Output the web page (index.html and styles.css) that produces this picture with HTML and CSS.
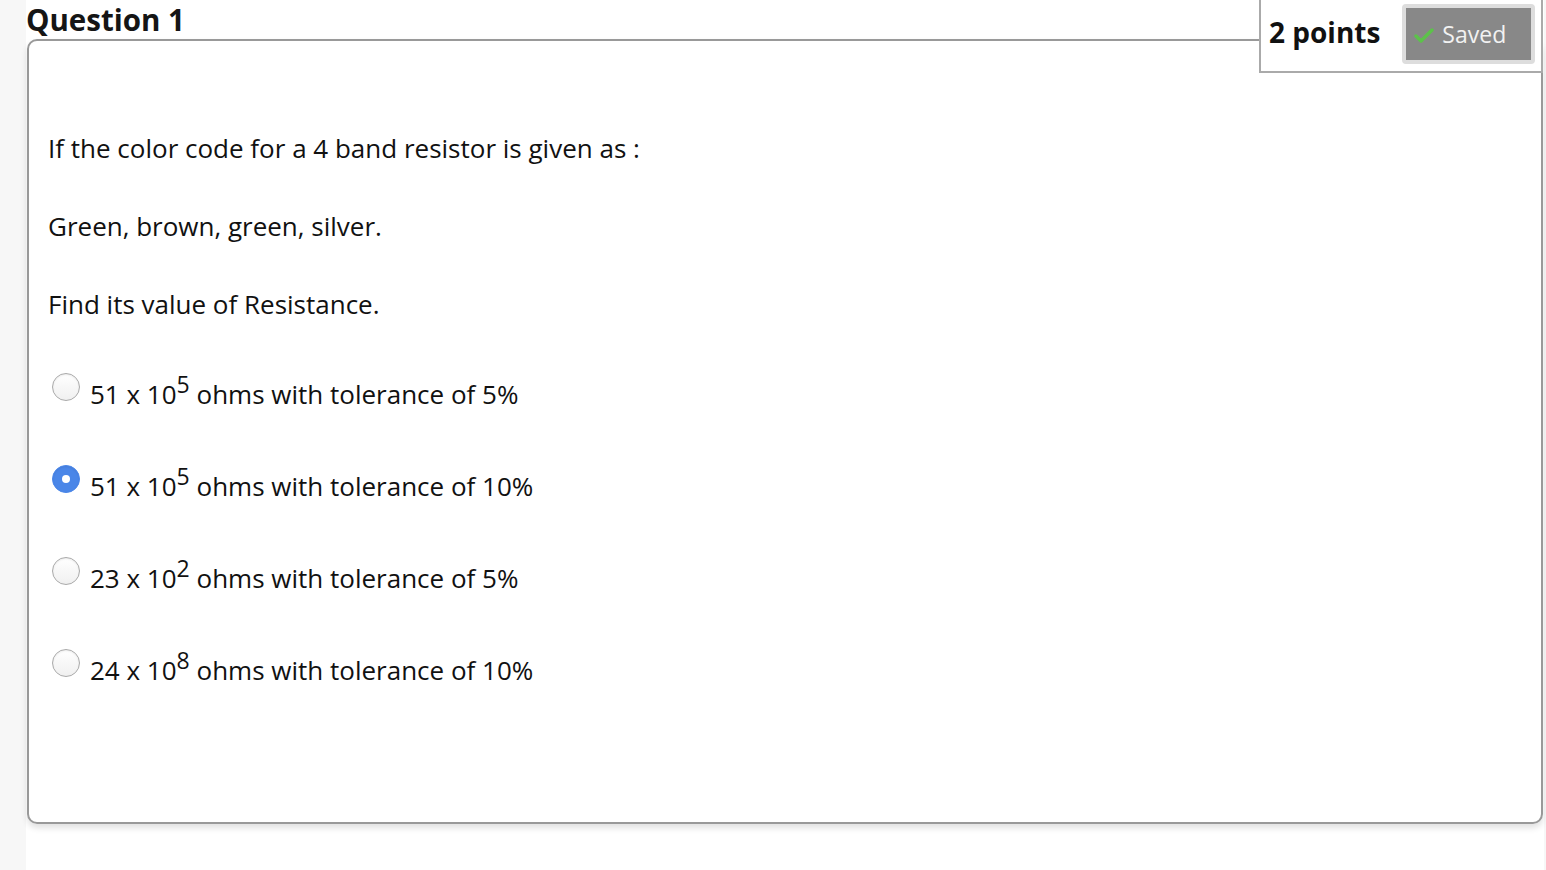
FILE: index.html
```html
<!DOCTYPE html>
<html>
<head>
<meta charset="utf-8">
<link rel="stylesheet" href="styles.css">
</head>
<body>
<div class="page">
  <div class="question">
    <h2 class="qtitle">Question 1</h2>
    <div class="points">
      <span class="pts">2 points</span>
      <span class="saved">
        <svg class="check" width="20" height="16" viewBox="0 0 20 16"><path d="M2 9 L7 14 L18 3" fill="none" stroke="#5cc24a" stroke-width="3.5" stroke-linecap="round" stroke-linejoin="round"/></svg>
        Saved
      </span>
    </div>
    <div class="card">
      <p class="stem">If the color code for a 4 band resistor is given as :</p>
      <p class="stem">Green, brown, green, silver.</p>
      <p class="stem last">Find its value of Resistance.</p>
      <ul class="options">
        <li class="opt"><span class="radio"></span><span class="label">51 x 10<sup>5</sup> ohms with tolerance of 5%</span></li>
        <li class="opt"><span class="radio on"></span><span class="label">51 x 10<sup>5</sup> ohms with tolerance of 10%</span></li>
        <li class="opt"><span class="radio"></span><span class="label">23 x 10<sup>2</sup> ohms with tolerance of 5%</span></li>
        <li class="opt"><span class="radio"></span><span class="label">24 x 10<sup>8</sup> ohms with tolerance of 10%</span></li>
      </ul>
    </div>
  </div>
</div>
</body>
</html>
```
FILE: styles.css
```css
html, body {
  margin: 0;
  padding: 0;
  background: #f7f7f7;
  font-family: "Open Sans", "Liberation Sans", sans-serif;
  color: #111;
}
.page {
  margin-left: 26px;
  width: 1518px;
  height: 870px;
  background: #fff;
}
.question {
  position: relative;
  padding-left: 1px;
  padding-right: 1px;
}
.qtitle {
  margin: 0 0 0 -1px;
  height: 39px;
  font-size: 29.5px;
  font-weight: 700;
  line-height: 40px;
  color: #151515;
}
.points {
  position: absolute;
  top: 0;
  right: 1px;
  width: 280px;
  height: 71px;
  border: 2px solid #aaa;
  border-top: none;
  background: #fff;
  display: flex;
  align-items: flex-start;
  box-sizing: content-box;
}
.pts {
  font-size: 28px;
  font-weight: 700;
  margin-left: 8px;
  margin-top: 12px;
  line-height: 40px;
  white-space: nowrap;
  color: #111;
}
.saved {
  margin-left: 22px;
  margin-top: 4px;
  width: 117px;
  height: 52px;
  background: #888;
  border: 4px solid #ddd;
  border-radius: 4px;
  color: #f2f2f2;
  font-size: 23px;
  display: flex;
  align-items: center;
  gap: 8px;
  padding-left: 8px;
  box-sizing: content-box;
}
.check { margin-top: 2px; }
.card {
  height: 785px;
  border: 2px solid #999;
  border-radius: 10px;
  box-shadow: 0 4px 6px rgba(0,0,0,0.12);
  padding: 90px 20px 0 19px;
  box-sizing: border-box;
}
.stem {
  margin: 0 0 44px 0;
  font-size: 26px;
  line-height: 34px;
  color: #111;
}
.stem.last { margin-bottom: 27px; }
.options {
  list-style: none;
  margin: 0;
  padding: 0;
}
.opt {
  display: flex;
  align-items: center;
  height: 92px;
  font-size: 26px;
}
.radio {
  width: 26px;
  height: 26px;
  border: 1px solid #aaa;
  border-radius: 50%;
  background: linear-gradient(#fff, #f0f0f0);
  margin-left: 4px;
  margin-right: 10px;
  margin-bottom: 14px;
  box-shadow: inset 0 1px 2px rgba(0,0,0,0.08);
  position: relative;
  flex: none;
}
.radio.on {
  background: #4a86e8;
  border-color: #4a86e8;
}
.radio.on::after {
  content: "";
  position: absolute;
  left: 9px;
  top: 9px;
  width: 8px;
  height: 8px;
  border-radius: 50%;
  background: #fff;
}
.label sup {
  font-size: 23px;
  line-height: 0;
  position: relative;
  top: -1px;
}
```
